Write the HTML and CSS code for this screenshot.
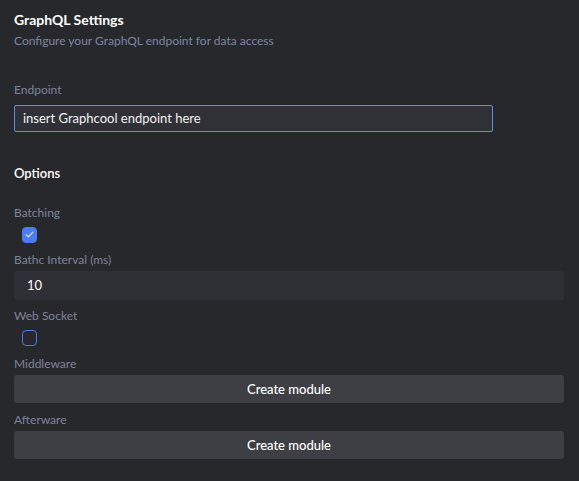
FILE: index.html
```html
<!DOCTYPE html>
<html>
<head>
<meta charset="utf-8">
<link rel="stylesheet" href="styles.css">
</head>
<body>
<div class="panel">
  <h1 class="title">GraphQL Settings</h1>
  <p class="subtitle">Configure your GraphQL endpoint for data access</p>

  <label class="label label-endpoint">Endpoint</label>
  <div class="endpoint-input">insert Graphcool endpoint here</div>

  <h2 class="section">Options</h2>

  <label class="label label-batching">Batching</label>
  <div class="check checked">
    <svg viewBox="0 0 15 15" width="15" height="15"><path d="M4.2 7.8 L6.4 9.9 L10.8 5.2" fill="none" stroke="#dfe6fb" stroke-width="1.2" stroke-linecap="round" stroke-linejoin="round"/></svg>
  </div>

  <label class="label label-gap">Bathc Interval (ms)</label>
  <div class="num-input">10</div>

  <label class="label label-gap3">Web Socket</label>
  <div class="check"></div>

  <label class="label label-gap2">Middleware</label>
  <button class="btn">Create module</button>

  <label class="label label-gap">Afterware</label>
  <button class="btn">Create module</button>
</div>
</body>
</html>
```
FILE: styles.css
```css
html, body {
  margin: 0;
  padding: 0;
  background: #27282b;
}
body {
  font-family: Lato, "Noto Sans", sans-serif;
  color: #ffffff;
}
.panel {
  display: flex;
  flex-direction: column;
  align-items: flex-start;
  padding: 11px 15px 20px 14px;
}
.title {
  margin: 0;
  font-size: 14px;
  line-height: 18px;
  font-weight: 700;
  color: #ffffff;
}
.subtitle {
  margin: 4px 0 0;
  font-size: 12px;
  line-height: 16px;
  color: #7c86a8;
}
.label {
  display: block;
  font-size: 12px;
  line-height: 16px;
  color: #7d849e;
}
.label-endpoint { margin-top: 33px; }
.label-batching { margin-top: 23px; }
.label-gap { margin-top: 9px; }
.label-gap2 { margin-top: 10px; }
.label-gap3 { margin-top: 8px; }
.endpoint-input {
  box-sizing: border-box;
  margin-top: 7px;
  width: 479px;
  height: 27px;
  border: 1px solid #5b8ef0;
  border-radius: 2px;
  background: #303136;
  padding-left: 8px;
  font-size: 13px;
  line-height: 25px;
  color: #f2f3f5;
}
.section {
  margin: 32px 0 0;
  font-size: 13px;
  line-height: 18px;
  font-weight: 600;
  color: #ffffff;
}
.check {
  box-sizing: border-box;
  margin: 6px 0 0 8px;
  width: 15px;
  height: 16px;
  border: 1.5px solid #4a78f0;
  border-radius: 4px;
}
.check svg { display: block; margin: -1.5px; }
.check.checked {
  background: #4c7cf4;
  border-color: #4c7cf4;
}
.num-input {
  box-sizing: border-box;
  margin-top: 3px;
  width: 550px;
  height: 29px;
  border-radius: 3px;
  background: #2f3035;
  padding-left: 13px;
  font-size: 13px;
  line-height: 29px;
  color: #ffffff;
}
.btn {
  display: block;
  margin-top: 3px;
  width: 550px;
  height: 28px;
  border: none;
  border-radius: 3px;
  background: #3e3f44;
  font-family: Lato, "Noto Sans", sans-serif;
  font-size: 13px;
  font-weight: 500;
  color: #ffffff;
  padding: 0;
}
```
